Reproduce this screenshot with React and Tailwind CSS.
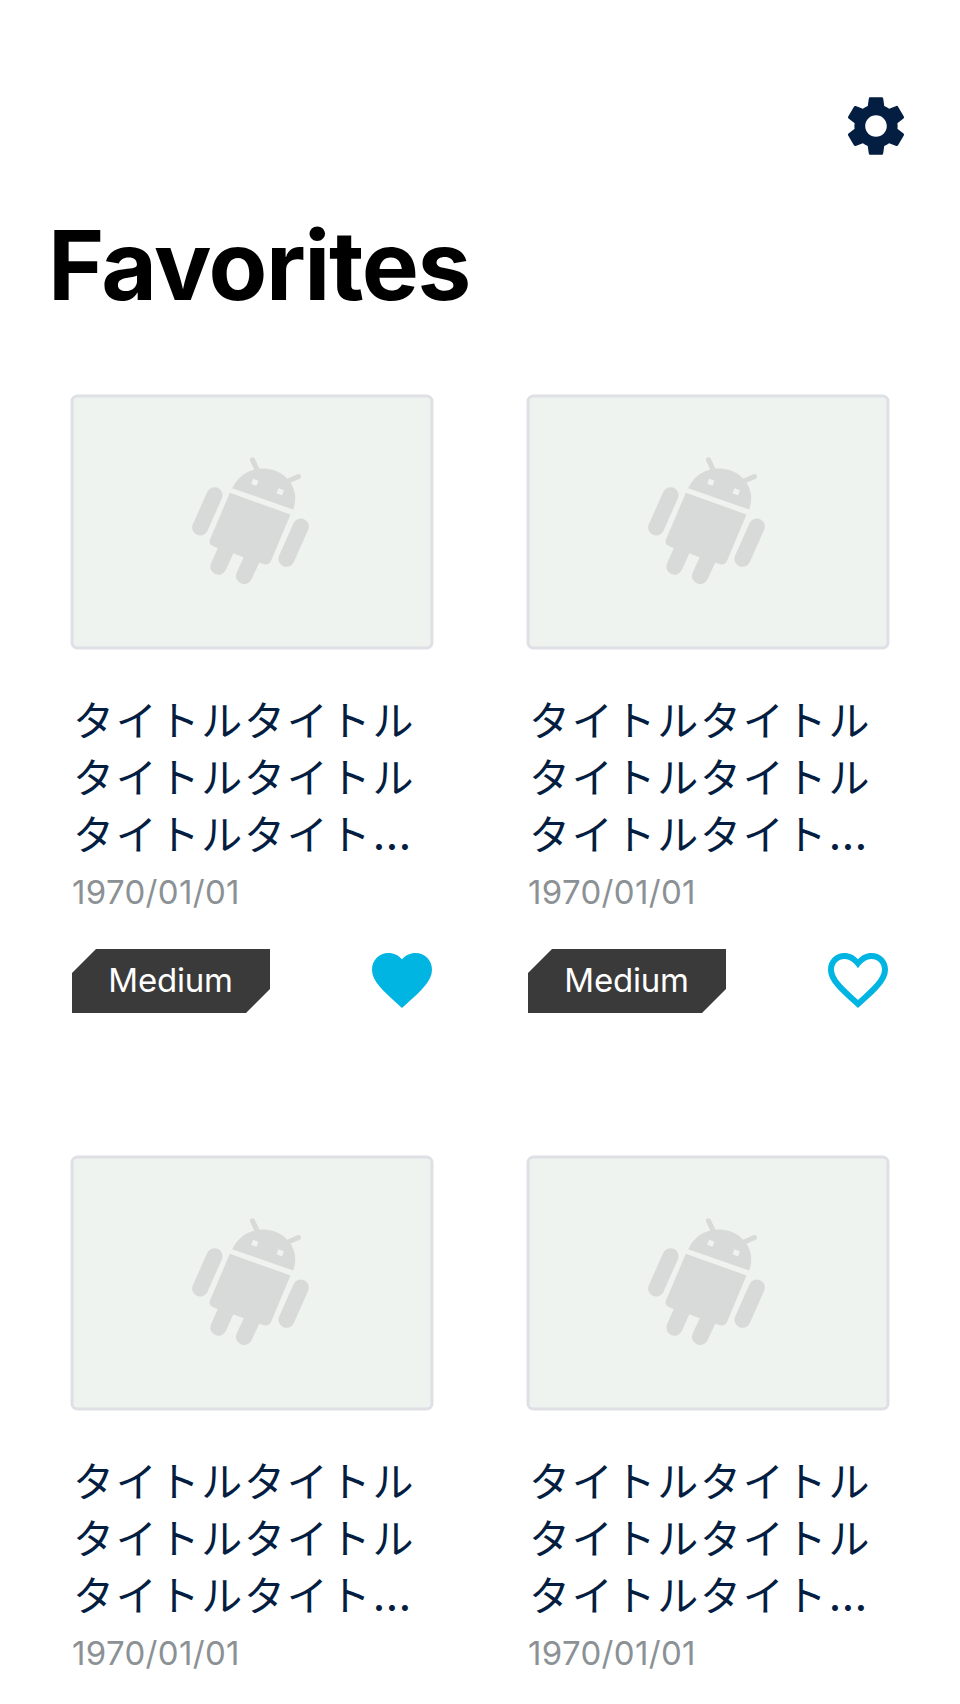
import { MdSettings, MdFavorite } from "react-icons/md";

const sessions = [
  { id: 1, favorite: true },
  { id: 2, favorite: false },
  { id: 3, favorite: true },
  { id: 4, favorite: false },
];

function Robot() {
  return (
    <svg viewBox="0 0 420 450" className="mt-[47.5px] ml-[106.5px] h-[150px] w-[140px]" fill="#d7dad8" stroke="#d7dad8" strokeWidth="0">
      <path d="M155 128C174 87 212 68 249 69C279 70 304 82 322 101C342 123 351 157 338 192Z" />
      <path d="M148 142L330 207L272 345Q267 359 252 357L235 351L190 335L159 324L113 308L100 303Q84 297 88 283Z" />
      <g fill="none" strokeLinecap="round">
        <path strokeWidth="15" d="M216 43L230 73M354 93L325 106" />
        <path strokeWidth="48" d="M102 149L59 246M361 243L318 340" />
        <path strokeWidth="49" d="M136 314L114 363M213 343L191 391" />
      </g>
      <path fill="#eef3ef" d="M218 100L234 106L228 121L212 115ZM294 128L310 134L305 150L288 143Z" />
    </svg>
  );
}

function HeartOutline({ className }) {
  return (
    <svg viewBox="0 0 24 24" className={className} fill="currentColor" fillRule="evenodd">
      <path d="M12 21.35l-1.45-1.32C5.4 15.36 2 12.28 2 8.5 2 5.42 4.42 3 7.5 3c1.74 0 3.41.81 4.5 2.09C13.09 3.81 14.76 3 16.5 3 19.58 3 22 5.42 22 8.5c0 3.78-3.4 6.86-8.55 11.54L12 21.35zM12 18.65C16.86 14.24 20 11.39 20 8.5 20 6.5 18.5 5 16.5 5 14.96 5 13.46 5.99 12 8.05 10.54 5.99 9.04 5 7.5 5 5.5 5 4 6.5 4 8.5 4 11.39 7.14 14.24 12 18.65z" />
    </svg>
  );
}

function Card({ favorite }) {
  const Heart = favorite ? MdFavorite : HeartOutline;
  return (
    <article className="h-[761px] w-[366px]">
      <div className="h-[255px] w-[363px] translate-x-[-0.5px] translate-y-[0.5px] rounded-[7px] border-[3px] border-[#dee0e6] bg-[#eef3ef]">
        <Robot />
      </div>
      <h2 className="mt-[44px] ml-[2px] h-[171px] w-[348px] font-['Inter','Noto_Sans_CJK_JP',sans-serif] text-[41px] leading-[57px] tracking-[1.77px] break-all text-[#041e42]">
        タイトルタイトルタイトルタイトルタイトルタイト<span className="text-[45px] leading-none tracking-normal">…</span>
      </h2>
      <p className="mt-[6px] ml-px text-[33px] leading-[44px] tracking-[0.33px] text-[#8b9194]">1970/01/01</p>
      <div className="mt-[31px] ml-px flex h-[64px] w-[366px] items-start justify-between">
        <span className="mt-[4px] flex h-[64px] w-[198px] shrink-0 items-center justify-center bg-[#3a3a3a] pr-px text-[33px] tracking-[-0.2px] text-white [clip-path:polygon(24px_0,100%_0,100%_40px,174px_100%,0_100%,0_24px)]">
          Medium
        </span>
        <Heart className="-mt-px size-[72px] shrink-0 text-[#00b5e2]" />
      </div>
    </article>
  );
}

export default function App() {
  return (
    <main className="flex h-[1704px] w-[960px] flex-col overflow-hidden bg-white font-['Inter',sans-serif]">
      <header className="flex shrink-0 justify-end pt-[90px] pr-[48px]">
        <MdSettings className="size-[72px] text-[#041e42]" />
      </header>
      <h1 className="mt-[43px] ml-[48px] h-[189px] shrink-0 text-[96px] leading-[120px] font-bold tracking-[-1.4px] text-black">Favorites</h1>
      <section className="ml-[71px] grid shrink-0 grid-cols-[366px_366px] gap-x-[90px]">
        {sessions.map((s) => (
          <Card key={s.id} favorite={s.favorite} />
        ))}
      </section>
    </main>
  );
}
